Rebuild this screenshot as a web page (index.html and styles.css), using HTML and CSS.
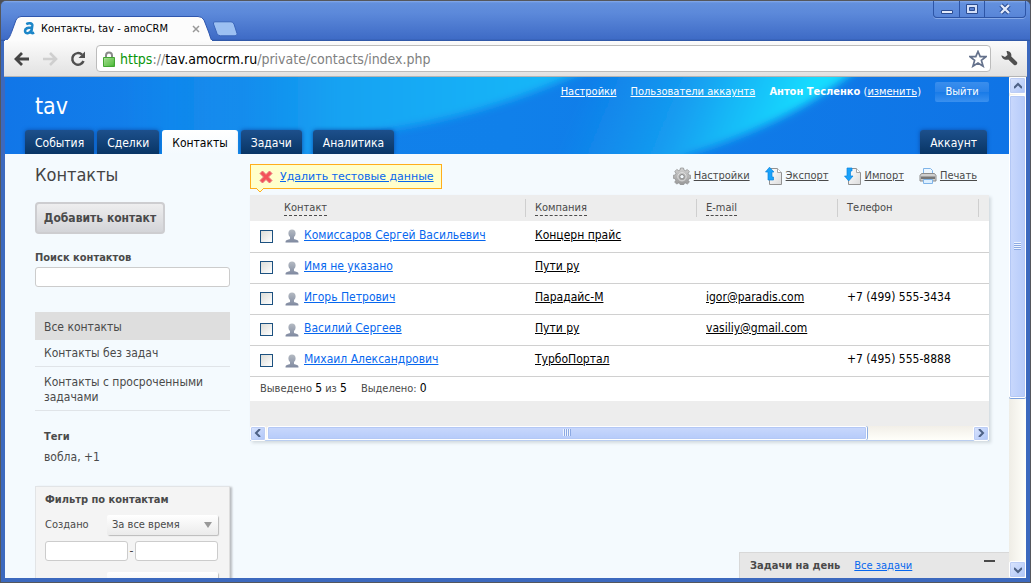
FILE: index.html
```html
<!DOCTYPE html>
<html lang="ru">
<head>
<meta charset="utf-8">
<title>Контакты, tav - amoCRM</title>
<link rel="stylesheet" href="styles.css">
</head>
<body>
<svg class="defs" aria-hidden="true">
  <defs>
    <linearGradient id="g-person" x1="0" y1="0" x2="0" y2="1"><stop offset="0" stop-color="#b4bac2"/><stop offset="1" stop-color="#7f89a0"/></linearGradient>
    <linearGradient id="g-page" x1="0" y1="0" x2="1" y2="1"><stop offset="0" stop-color="#fff"/><stop offset="1" stop-color="#dcdcdc"/></linearGradient>
    <linearGradient id="g-lock" x1="0" y1="0" x2="1" y2="1"><stop offset="0" stop-color="#b5e5a0"/><stop offset="1" stop-color="#3fb32c"/></linearGradient>
    <linearGradient id="g-gear" x1="0" y1="0" x2="0" y2="1"><stop offset="0" stop-color="#d2d2d2"/><stop offset="1" stop-color="#949494"/></linearGradient>
    <symbol id="person" viewBox="0 0 14 14"><path fill="url(#g-person)" d="M7 .5c2.300 0 3.600 1.400 3.600 3.800 0 1.500-.6 2.900-1.600 3.800v1.600c0 .6 3 .9 4 1.900.4.400.5 1 .5 1.900H.5c0-.9.100-1.500.5-1.900 1-1 4-1.300 4-1.900V8.100C4 7.200 3.400 5.800 3.400 4.300 3.400 1.900 4.700.5 7 .5z"/></symbol>
  </defs>
</svg>
<div class="window">
  <div class="titlebar">
    <div class="tab">
      <svg class="tab-shape" viewBox="0 0 208 25" aria-hidden="true"><path d="M0 25C5 24 6 20 8 15L12 4Q13.500.5 17 .5H194Q198 .5 200 4L205 17Q207 24 208 25z" fill="#fcfcfc" stroke="#2f57ae"/><path d="M1 24h207v2H1z" fill="#fcfcfc"/></svg>
      <svg class="favicon" viewBox="0 0 14 14" aria-hidden="true"><path fill="none" stroke="#1c86c8" stroke-width="2.800" d="M3.500 2.300C6 1 10.300.9 10 3.500L9 10.500c-.2 1.700 1 1.900 3 1M9.500 6C5 5.800 2.200 7 2.200 9.600c0 3.600 5.200 3.300 7-.9"/></svg>
      <span class="tab-title">Контакты, tav - amoCRM</span>
      <button class="tab-close" aria-label="Закрыть вкладку"><svg viewBox="0 0 8 8"><path d="M1 1l6 6M7 1L1 7" stroke="#999" stroke-width="1.500"/></svg></button>
    </div>
    <button class="new-tab" aria-label="Новая вкладка"><svg viewBox="0 0 26 16"><path d="M1.500 3Q.8.8 3 .8H19Q21 .8 22 3L25 12.500Q25.500 14.800 23 14.800H8.500Q6 14.800 5 12.500z" fill="#9cc0f2" stroke="#3a65ba"/></svg></button>
    <div class="window-buttons">
      <button aria-label="Свернуть"><svg viewBox="0 0 14 12"><path d="M1.500 7.500h11v3h-11z" fill="#e3eafa" stroke="#2b4c91"/></svg></button>
      <button aria-label="Развернуть"><svg viewBox="0 0 14 12"><path d="M1.500 1.500h11v9h-11z" fill="#d3dff8" stroke="#2b4c91"/><path d="M4.500 4.500h5v3h-5z" fill="#5a7fcf" stroke="#2b4c91"/></svg></button>
      <button class="wide" aria-label="Закрыть"><svg viewBox="0 0 14 12"><path d="M3 2l8 8M11 2L3 10" stroke="#2b4c91" stroke-width="4.500"/><path d="M3 2l8 8M11 2L3 10" stroke="#e3eafa" stroke-width="2.400"/></svg></button>
    </div>
  </div>

  <div class="toolbar">
    <button aria-label="Назад"><svg viewBox="0 0 16 16"><path d="M15 8H3M8 2L2 8l6 6" fill="none" stroke="#454545" stroke-width="2.800"/></svg></button>
    <button aria-label="Вперёд"><svg viewBox="0 0 16 16"><path d="M1 8h12M8 2l6 6-6 6" fill="none" stroke="#cfcfcf" stroke-width="2.600"/></svg></button>
    <button aria-label="Обновить"><svg viewBox="0 0 16 16"><path d="M13.500 10A5.800 5.800 0 1 1 12 3.600" fill="none" stroke="#4f4f4f" stroke-width="2.500"/><path d="M15 .5V7H8.500z" fill="#4f4f4f"/></svg></button>
    <div class="address">
      <svg class="lock" viewBox="0 0 12 16" aria-hidden="true"><path d="M3 7V4.500a3 3 0 0 1 6 0V7" fill="none" stroke="#8a8a8a" stroke-width="2"/><path d="M.5 6.500h11v9H.5z" fill="url(#g-lock)" stroke="#43a533"/><path d="M2 9h8M2 11h8M2 13h8" stroke="#79cc62" stroke-opacity=".6"/></svg>
      <div class="url"><span class="scheme">https</span>://<span class="host">tav.amocrm.ru</span>/private/contacts/index.php</div>
      <svg class="star" viewBox="0 0 18 18" aria-hidden="true"><path d="M9 1.500l2.200 5.200H17l-4.600 3.700 1.700 5.800L9 13l-5.100 3.200 1.700-5.800L1 6.700h5.800z" fill="#fff" stroke="#65728c" stroke-width="1.700"/></svg>
    </div>
    <button class="wrench" aria-label="Меню"><svg viewBox="0 0 18 18"><path d="M6.500 1C9.500.8 12 3 11.300 6.400L17 12c1 2-1 4-3 3L8.200 9.400C5 10.500 1.500 8.500 1.500 5.200L5 7l2.500-2z" fill="#505050"/></svg></button>
  </div>

  <div class="viewport">
    <div class="page">
      <header class="header">
        <svg class="header-bg" viewBox="0 0 1004 77" preserveAspectRatio="none" aria-hidden="true">
          <defs>
            <linearGradient id="h0" x1="0" x2="1"><stop offset="0" stop-color="#1176e8"/><stop offset=".16" stop-color="#1281eb"/><stop offset=".5" stop-color="#1080ea"/><stop offset="1" stop-color="#0f74e6"/></linearGradient>
            <linearGradient id="h1" gradientUnits="userSpaceOnUse" x1="120" y1="0" x2="540" y2="0" ><stop offset="0" stop-color="#16a6f3" stop-opacity="0"/><stop offset=".28" stop-color="#149af0" stop-opacity=".45"/><stop offset=".5" stop-color="#16a2f2"/><stop offset="1" stop-color="#17b6f8"/></linearGradient>
            <linearGradient id="h2" gradientUnits="userSpaceOnUse" x1="575" y1="20" x2="770" y2="100"><stop offset="0" stop-color="#17a0f0" stop-opacity="0"/><stop offset=".45" stop-color="#16a4f2" stop-opacity=".8"/><stop offset=".65" stop-color="#17b4f6"/><stop offset="1" stop-color="#18dcff"/></linearGradient>
            <filter id="soft" x="-10%" y="-30%" width="120%" height="160%"><feGaussianBlur stdDeviation="4"/></filter>
          </defs>
          <path d="M0 0h1004v77H0z" fill="url(#h0)"/>
          <path filter="url(#soft)" d="M60-20H620L565 0C510 24 450 42 388 52C350 58 320 66 290 90H60z" fill="url(#h1)"/>
          <path filter="url(#soft)" d="M480-20H870L842 0C800 32 745 58 685 77L640 100H480z" fill="url(#h2)"/>
        </svg>
        <div class="header-top">
          <div class="logo">tav</div>
          <nav class="user-links">
            <a href="#">Настройки</a>
            <a href="#">Пользователи аккаунта</a>
            <span><b>Антон Тесленко</b> (<a href="#">изменить</a>)</span>
            <button class="logout">Выйти</button>
          </nav>
        </div>
        <nav class="tabs">
          <a href="#">События</a>
          <a href="#">Сделки</a>
          <a href="#" class="active">Контакты</a>
          <a href="#">Задачи</a>
          <a href="#" class="apart">Аналитика</a>
          <a href="#" class="account">Аккаунт</a>
        </nav>
      </header>

      <div class="content">
        <aside class="sidebar">
          <h1>Контакты</h1>
          <button class="add">Добавить контакт</button>
          <label class="search-label" for="search">Поиск контактов</label>
          <input id="search" class="field" type="text">
          <nav class="filters">
            <a href="#" class="selected">Все контакты</a>
            <a href="#">Контакты без задач</a>
            <a href="#">Контакты с просроченными задачами</a>
          </nav>
          <div class="tags"><h2>Теги</h2><p>вобла, +1</p></div>
          <form class="panel">
            <h2>Фильтр по контактам</h2>
            <div class="panel-row">
              <label for="created">Создано</label>
              <span class="select"><select id="created"><option>За все время</option></select></span>
            </div>
            <div class="range">
              <input class="field" type="text" aria-label="С даты"><span>-</span><input class="field" type="text" aria-label="По дату">
            </div>
            <div class="panel-row last">
              <span class="select"><select aria-label="Изменено"><option></option></select></span>
            </div>
          </form>
        </aside>

        <main class="main">
          <div class="actions">
            <div class="notice">
              <svg class="cross" viewBox="0 0 14 14" aria-hidden="true"><path d="M3.500 1L7 4.500 10.500 1 13 3.500 9.500 7l3.500 3.500-2.500 2.500L7 9.500 3.500 13 1 10.500 4.500 7 1 3.500z" fill="#f4525a" stroke="#e8787c"/></svg>
              <a href="#">Удалить тестовые данные</a>
              <svg class="pointer" viewBox="0 0 8 5" aria-hidden="true"><path d="M0 0l4 4 4-4" fill="#ffffcb" stroke="#ffae1c"/></svg>
            </div>
            <div class="tools">
              <a href="#"><svg class="tool" viewBox="0 0 18 18"><path d="M7.500 1h3l.4 2 1.600.7 1.800-1.200 2.100 2.100-1.200 1.800.7 1.600 2 .4v3l-2 .4-.7 1.500 1.200 1.800-2.100 2-1.800-1.100-1.600.6-.4 2.100h-3l-.4-2.100-1.600-.6-1.800 1.100-2-2 1.100-1.800-.6-1.500L.3 11.300v-3l2-.4.600-1.600-1.100-1.800 2-2.100 1.800 1.200L7.100 3z" fill="url(#g-gear)" stroke="#8c8c8c" stroke-width=".7"/><circle cx="9" cy="9.700" r="4.200" fill="none" stroke="#dedede"/><circle cx="9" cy="9.700" r="2.200" fill="#f4fafe" stroke="#858585"/></svg><span>Настройки</span></a>
              <a href="#"><svg class="tool" viewBox="0 0 18 18"><path d="M4.500 1.500h8l4 4v12h-12z" fill="url(#g-page)" stroke="#929292"/><path d="M12.500 1.500v4h4" fill="#fff" stroke="#a5a5a5"/><path d="M4.500.2L.5 5H3v8h5.500v-3H7V5h2z" fill="#1aa2fa" stroke="#0b84dc" stroke-width=".7"/></svg><span>Экспорт</span></a>
              <a href="#"><svg class="tool" viewBox="0 0 18 18"><path d="M4.500 1.500h8l4 4v12h-12z" fill="url(#g-page)" stroke="#929292"/><path d="M12.500 1.500v4h4" fill="#fff" stroke="#a5a5a5"/><path d="M3 1h5v3H6.500v5H9l-4.300 5L.5 9H3z" fill="#1aa2fa" stroke="#0b84dc" stroke-width=".7"/></svg><span>Импорт</span></a>
              <a href="#"><svg class="tool" viewBox="0 0 18 18"><path d="M4.500 7V1.500h7l2 2V7" fill="#eef7ff" stroke="#7fb4e8"/><path d="M2.500 6.500h13l1.500 2v5.500H1V8.500z" fill="#cfcfcf" stroke="#8c8c8c"/><path d="M2 9.500h14v2.500H2z" fill="#777"/><path d="M4.500 12.500h9v4h-9z" fill="#dcefff" stroke="#7fb4e8"/></svg><span>Печать</span></a>
            </div>
          </div>

          <div class="grid">
            <table>
              <colgroup><col class="c-check"><col class="c-name"><col class="c-company"><col class="c-mail"><col class="c-phone"><col></colgroup>
              <thead>
                <tr><th></th><th><div><span class="sort">Контакт</span></div></th><th><div><span class="sort">Компания</span></div></th><th><div><span class="sort">E-mail</span></div></th><th><div><span>Телефон</span></div></th><th></th></tr>
              </thead>
              <tbody>
                <tr><td><input type="checkbox" aria-label="Комиссаров Сергей Васильевич"></td><td><div class="name"><svg><use href="#person"/></svg><a href="#">Комиссаров Сергей Васильевич</a></div></td><td><a href="#">Концерн прайс</a></td><td></td><td></td><td></td></tr>
                <tr><td><input type="checkbox" aria-label="Имя не указано"></td><td><div class="name"><svg><use href="#person"/></svg><a href="#">Имя не указано</a></div></td><td><a href="#">Пути ру</a></td><td></td><td></td><td></td></tr>
                <tr><td><input type="checkbox" aria-label="Игорь Петрович"></td><td><div class="name"><svg><use href="#person"/></svg><a href="#">Игорь Петрович</a></div></td><td><a href="#">Парадайс-М</a></td><td><a href="#">igor@paradis.com</a></td><td>+7 (499) 555-3434</td><td></td></tr>
                <tr><td><input type="checkbox" aria-label="Василий Сергеев"></td><td><div class="name"><svg><use href="#person"/></svg><a href="#">Василий Сергеев</a></div></td><td><a href="#">Пути ру</a></td><td><a href="#">vasiliy@gmail.com</a></td><td></td><td></td></tr>
                <tr><td><input type="checkbox" aria-label="Михаил Александрович"></td><td><div class="name"><svg><use href="#person"/></svg><a href="#">Михаил Александрович</a></div></td><td><a href="#">ТурбоПортал</a></td><td></td><td>+7 (495) 555-8888</td><td></td></tr>
              </tbody>
            </table>
            <div class="summary"><span>Выведено <em>5</em> из <em>5</em></span><span>Выделено: <em>0</em></span></div>
            <div class="grid-foot"></div>
            <div class="hscroll">
              <button aria-label="Влево"><svg viewBox="0 0 8 8"><path d="M6 0L2 4l4 4" fill="none" stroke="#4d6185" stroke-width="2"/></svg></button>
              <div class="htrack"><div class="hthumb"><i></i></div></div>
              <button aria-label="Вправо"><svg viewBox="0 0 8 8"><path d="M2 0l4 4-4 4" fill="none" stroke="#4d6185" stroke-width="2"/></svg></button>
            </div>
          </div>
        </main>
      </div>

      <div class="day-tasks">
        <b>Задачи на день</b><a href="#">Все задачи</a><button aria-label="Свернуть задачи"></button>
      </div>
    </div>

    <div class="vscroll">
      <button aria-label="Вверх"><svg viewBox="0 0 8 8"><path d="M0 6l4-4 4 4" fill="none" stroke="#4d6185" stroke-width="2"/></svg></button>
      <div class="vtrack"><div class="vthumb"><i></i></div></div>
      <button aria-label="Вниз"><svg viewBox="0 0 8 8"><path d="M0 2l4 4 4-4" fill="none" stroke="#4d6185" stroke-width="2"/></svg></button>
    </div>
  </div>
</div>
</body>
</html>
```
FILE: styles.css
```css
* { box-sizing: border-box; }
body { margin: 0; background: #4d4f55; font: 12px/16px "DejaVu Sans Condensed", "DejaVu Sans", sans-serif; color: #4a4a4a; }
button { margin: 0; padding: 0; border: 0; background: none; font: inherit; color: inherit; display: flex; align-items: center; justify-content: center; }
h1, h2, p { margin: 0; }
svg { display: block; flex: none; }
.defs { position: absolute; width: 0; height: 0; }

.window { height: 100vh; display: flex; flex-direction: column; padding: 0 4px 4px; background: #3c69be; border: 1px solid #55575c; border-radius: 6px 6px 0 0; overflow: hidden; }

.titlebar { display: flex; align-items: flex-end; height: 40px; flex: none; margin: 0 -4px; padding-left: 3px; background: linear-gradient(#86aaea, #6390dd 2px, #5c89da 12px, #3e6bc6 38px, #2c539f); }
.tab { position: relative; display: flex; align-items: center; width: 208px; height: 25px; padding: 0 12px 0 19px; gap: 5px; color: #000; }
.tab-shape { position: absolute; inset: 0; width: 208px; height: 25px; }
.favicon { position: relative; width: 13px; height: 13px; }
.tab-title { position: relative; flex: 1; font-size: 11px; line-height: 18px; white-space: nowrap; }
.tab-close { position: relative; width: 8px; height: 8px; }
.tab-close svg { width: 8px; height: 8px; }
.new-tab { align-self: flex-end; padding-bottom: 4px; }
.new-tab svg { width: 26px; height: 16px; }
.window-buttons { display: flex; align-self: flex-start; margin: 0 4px 0 auto; border: 1px solid #2d55a6; border-top: 0; border-radius: 0 0 4px 4px; box-shadow: 0 1px 0 #86a9e8; }
.window-buttons button { width: 25px; height: 16px; border-left: 1px solid #2d55a6; }
.window-buttons button:first-child { border-left: 0; }
.window-buttons .wide { width: 41px; }
.window-buttons svg { width: 14px; height: 12px; }

.toolbar { display: flex; align-items: center; gap: 12px; height: 36px; flex: none; margin: 0 -1px; padding: 0 9px 0 10px; background: linear-gradient(#fbfbfb, #e2e2e2); border-bottom: 1px solid #b5b5b5; }
.toolbar button svg { width: 16px; height: 16px; }
.toolbar .wrench { margin-left: -3px; }
.toolbar .wrench svg { width: 18px; height: 18px; }
.address { flex: 1; display: flex; align-items: center; gap: 5px; height: 27px; margin-left: -2px; padding: 0 3px 0 6px; background: #fff; border: 1px solid #bcbcbc; border-radius: 4px; }
.lock { width: 12px; height: 16px; }
.star { width: 18px; height: 18px; }
.url { flex: 1; font: 14px/20px "DejaVu Sans Condensed", "DejaVu Sans", sans-serif; color: #808080; }
.scheme { color: #0a960a; }
.host { color: #000; }

.viewport { flex: 1; min-height: 0; display: flex; background: #f4fafe; }
.page { position: relative; flex: 1; min-width: 0; overflow: hidden; background: #f4fafe; }

.header { position: relative; display: flex; flex-direction: column; justify-content: space-between; height: 77px; color: #fff; background: #0f74e6; overflow: hidden; }
.header a { color: #fff; }
.header-bg { position: absolute; inset: 0; width: 100%; height: 100%; }
.header-top { position: relative; display: flex; justify-content: space-between; padding: 5px 20px 0 30px; }
.logo { padding-top: 12px; font: 23px/24px "DejaVu Sans Condensed", "DejaVu Sans", sans-serif; }
.user-links { display: flex; align-items: center; gap: 14px; height: 20px; font-size: 11px; }
.logout { width: 54px; height: 20px; border-radius: 2px; font-size: 11px; background: linear-gradient(#3a8eed, #2882e9 50%, #187ae7 50%, #3a90ef); color: #fff; }
.tabs { position: relative; display: flex; gap: 3px; height: 24px; padding: 0 22px 0 20px; }
.tabs a { padding: 0 10px; border-radius: 3px 3px 0 0; line-height: 26px; text-decoration: none; background: linear-gradient(#1d508c, #083565); box-shadow: 0 0 4px #0a4da8; }
.tabs .active { background: linear-gradient(#fff, #f4fafe); color: #000; box-shadow: none; }
.tabs .apart { margin-left: 8px; }
.tabs .account { margin-left: auto; }

.content { display: flex; gap: 20px; padding: 10px 20px 0 30px; }
.sidebar { width: 195px; flex: none; }
.sidebar h1 { font: 18px/22px "DejaVu Sans Condensed", "DejaVu Sans", sans-serif; color: #444; }
.add { width: 130px; height: 32px; margin-top: 16px; border: 2px solid #cdcdd0; border-radius: 4px; background: linear-gradient(#eeeeef, #d3d4d8); font-weight: bold; }
.search-label { display: block; margin-top: 16px; font-size: 11px; font-weight: bold; }
.field { display: block; width: 100%; height: 20px; margin: 0; padding: 0 4px; border: 1px solid #ccc; border-radius: 3px; background: #fff; }
.search-label + .field { margin-top: 1px; }
.filters { margin-top: 25px; }
.filters a { display: block; padding: 6px 9px 5px; border-bottom: 1px solid #e0e4e8; line-height: 15px; color: #4a4a4a; text-decoration: none; }
.filters .selected { padding: 8px 9px 4px; background: #dedede; border-color: #dedede; }
.filters a:last-child { padding-top: 8px; }
.tags { padding: 18px 9px 0; }
h2 { font-size: 11px; line-height: 16px; }
.tags p { padding-top: 4px; }
.panel { margin-top: 21px; padding: 5px 11px 0 9px; background: #f4f4f4; border: 1px solid #e2e4e6; border-right-color: #ddd; box-shadow: 2px 1px 2px #b9bcc0; }
.panel-row { display: flex; justify-content: space-between; align-items: center; height: 20px; margin-top: 7px; font-size: 11px; }
.select { position: relative; width: 111px; }
.select::after { content: ""; position: absolute; right: 6px; top: 7px; border: 4px solid transparent; border-top: 6px solid #999; border-bottom: 0; pointer-events: none; }
.select select { appearance: none; display: block; width: 100%; height: 20px; padding: 0 5px; border: 0; border-radius: 2px; background: linear-gradient(#fff, #ebebeb); box-shadow: 1px 1px 1px #bbb; font: inherit; color: inherit; }
.range { display: flex; align-items: center; margin-top: 6px; }
.range span { width: 7px; flex: none; text-align: center; line-height: 20px; }
.panel .last { justify-content: flex-end; margin-top: 11px; }

.main { flex: 1; min-width: 0; }
.actions { display: flex; justify-content: space-between; align-items: flex-start; height: 31px; }
.notice { position: relative; display: flex; align-items: center; gap: 7px; height: 25px; padding: 0 7px 0 8px; border: 1px solid #ffae1c; background: #ffffcb; font: 11px/16px "DejaVu Sans", sans-serif; white-space: nowrap; }
.notice a, .name a, .day-tasks a { color: #0767ee; }
.cross { width: 14px; height: 14px; }
.pointer { position: absolute; left: 5px; top: 23px; width: 8px; height: 5px; }
.tools { display: flex; gap: 15px; padding: 3px 12px 0 0; font-size: 11px; }
.tools a { display: flex; align-items: center; gap: 3px; color: #4a4a4a; }
.tool { width: 18px; height: 18px; }

.grid { background: #fff; box-shadow: 2px 2px 3px #d2dadf; }
table { width: 100%; table-layout: fixed; border-collapse: collapse; }
.c-check { width: 34px; }
.c-name { width: 242px; }
.c-company { width: 171px; }
.c-mail { width: 141px; }
.c-phone { width: 141px; }
th { height: 26px; padding: 0; background: #ededed; font-weight: normal; font-size: 11px; text-align: left; }
th div { height: 18px; padding-left: 9px; border-right: 1px solid #cfcfcf; line-height: 18px; }
th:nth-child(2) div { padding-left: 0; }
.sort { display: inline-block; line-height: 14px; border-bottom: 1px dashed #4a4a4a; }
td { height: 31px; padding: 0 0 3px 9px; border-bottom: 1px solid #d0d0d0; color: #000; white-space: nowrap; }
td:first-child { padding-left: 10px; }
td:nth-child(2) { padding-left: 1px; }
td a { color: #000; }
.name { display: flex; align-items: center; gap: 5px; }
.name svg { width: 14px; height: 14px; margin-top: 3px; }
td input { appearance: none; display: block; width: 13px; height: 13px; margin: 3px 0 0; border: 1px solid #1c5180; background: linear-gradient(135deg, #dcdcd7, #fff); }
.summary { display: flex; gap: 14px; padding: 4px 10px; font-size: 11px; }
.summary em { font-style: normal; font-size: 12px; line-height: 14px; color: #000; }
.grid-foot { height: 25px; background: #ededed; }
.hscroll { display: flex; height: 15px; background: linear-gradient(#f2efe8, #fffffa); border-bottom: 1px solid #b9cdf0; }
.hscroll button, .vscroll button { flex: none; width: 16px; height: 15px; border: 1px solid #fff; border-radius: 2px; background: linear-gradient(135deg, #dbe5fd, #aec5f8); box-shadow: inset 0 0 0 1px #bccdf5; }
.hscroll svg, .vscroll svg { width: 8px; height: 8px; }
.htrack { flex: 1; padding-left: 1px; }
.hthumb { width: 85%; height: 14px; display: flex; align-items: center; justify-content: center; border: 1px solid #fff; border-radius: 2px; background: linear-gradient(#c9d8fc, #b6cbfa); box-shadow: 1px 0 0 #8fafe0, inset 0 0 0 1px #b4c8f5; }
.hthumb i { width: 8px; height: 7px; background: repeating-linear-gradient(90deg, #eef4fe 0 1px, #8ca9e3 1px 2px); }
.vscroll { width: 17px; flex: none; display: flex; flex-direction: column; background: linear-gradient(90deg, #efede6, #fffffa); }
.vscroll button { width: 17px; height: 17px; }
.vtrack { flex: 1; padding-top: 1px; }
.vthumb { height: 65%; display: flex; align-items: center; justify-content: center; border: 1px solid #fff; border-radius: 2px; background: linear-gradient(90deg, #c9d8fc, #b6cbfa); box-shadow: 0 1px 0 #7ba0dd, inset 0 0 0 1px #b4c8f5; }
.vthumb i { width: 7px; height: 8px; background: repeating-linear-gradient(#eef4fe 0 1px, #8ca9e3 1px 2px); }

.day-tasks { position: absolute; right: 0; bottom: 0; display: flex; align-items: center; gap: 14px; width: 270px; height: 26px; padding: 0 14px 0 10px; border: 1px solid #d8d8d8; border-width: 1px 0 0 1px; background: #e7e7e7; font-size: 11px; }
.day-tasks button { width: 11px; height: 2px; margin: 0 0 10px auto; background: #4a4a4a; }
```
